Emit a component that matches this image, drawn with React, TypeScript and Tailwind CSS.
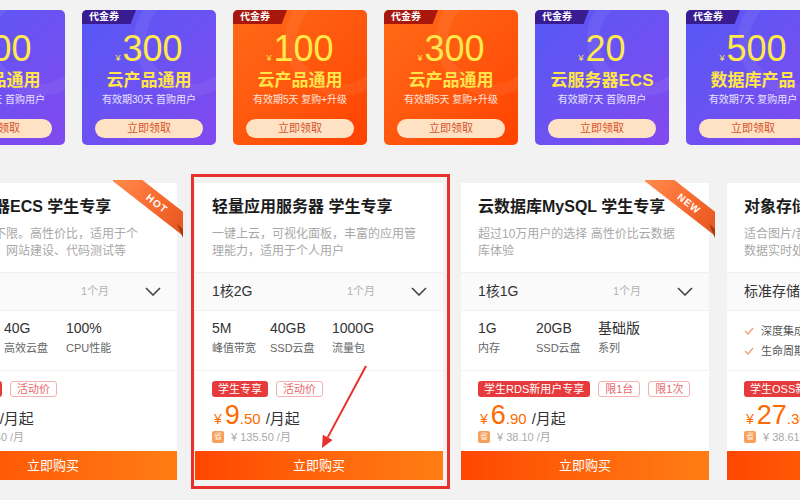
import React from 'react';

type Coupon = {
  amount: string;
  title: string;
  note: string;
  tone: 'purple' | 'orange';
};

type Tag = { text: string; solid?: boolean };

type Product = {
  title: string;
  desc: string[];
  spec: string;
  specs?: { value: string; label: string }[];
  features?: string[];
  tags: Tag[];
  price: string;
  cents: string;
  original: string;
  ribbon?: string;
};

const coupons: Coupon[] = [
  { amount: '200', title: '云产品通用', note: '有效期30天 首购用户', tone: 'purple' },
  { amount: '300', title: '云产品通用', note: '有效期30天 首购用户', tone: 'purple' },
  { amount: '100', title: '云产品通用', note: '有效期5天 复购+升级', tone: 'orange' },
  { amount: '300', title: '云产品通用', note: '有效期5天 复购+升级', tone: 'orange' },
  { amount: '20', title: '云服务器ECS', note: '有效期7天 首购用户', tone: 'purple' },
  { amount: '500', title: '数据库产品', note: '有效期7天 复购用户', tone: 'purple' },
];

const products: Product[] = [
  {
    title: '云服务器ECS 学生专享',
    desc: ['峰值带宽不限。高性价比，适用于个', '人开发者、网站建设、代码测试等'],
    spec: '1核2G',
    specs: [
      { value: '2G', label: '内存' },
      { value: '40G', label: '高效云盘' },
      { value: '100%', label: 'CPU性能' },
    ],
    tags: [{ text: '学生专享', solid: true }, { text: '活动价' }],
    price: '9',
    cents: '.50',
    original: '¥ 117.50 /月',
    ribbon: 'HOT',
  },
  {
    title: '轻量应用服务器 学生专享',
    desc: ['一键上云，可视化面板，丰富的应用管', '理能力，适用于个人用户'],
    spec: '1核2G',
    specs: [
      { value: '5M', label: '峰值带宽' },
      { value: '40GB', label: 'SSD云盘' },
      { value: '1000G', label: '流量包' },
    ],
    tags: [{ text: '学生专享', solid: true }, { text: '活动价' }],
    price: '9',
    cents: '.50',
    original: '¥ 135.50 /月',
  },
  {
    title: '云数据库MySQL 学生专享',
    desc: ['超过10万用户的选择 高性价比云数据', '库体验'],
    spec: '1核1G',
    specs: [
      { value: '1G', label: '内存' },
      { value: '20GB', label: 'SSD云盘' },
      { value: '基础版', label: '系列' },
    ],
    tags: [{ text: '学生RDS新用户专享', solid: true }, { text: '限1台' }, { text: '限1次' }],
    price: '6',
    cents: '.90',
    original: '¥ 38.10 /月',
    ribbon: 'NEW',
  },
  {
    title: '对象存储OSS 学生专享',
    desc: ['适合图片/音视频等多媒体数据存储，', '数据实时处理，海量存储'],
    spec: '标准存储',
    features: ['深度集成数据处理服务', '生命周期管理'],
    tags: [{ text: '学生OSS新用户专享', solid: true }],
    price: '27',
    cents: '.30',
    original: '¥ 38.61 /月',
  },
];

function CouponCard({ c }: { c: Coupon }) {
  const purple = c.tone === 'purple';
  return (
    <div
      className={`relative h-[135px] w-[134px] shrink-0 overflow-hidden rounded-[5px] bg-linear-to-br ${
        purple ? 'from-[#5358f6] to-[#8249ef]' : 'from-[#ff6a18] to-[#ff4100]'
      }`}
    >
      <div className="absolute -right-[30px] -top-[26px] h-[112px] w-[112px] rounded-full border-[12px] border-white/[0.06]" />
      <div
        className={`absolute left-0 top-0 flex h-[14px] w-[54px] items-center pl-[7px] text-[10px] font-bold leading-none text-white [clip-path:polygon(0_0,100%_0,90%_100%,0_100%)] ${
          purple ? 'bg-[#3a1c92]' : 'bg-[#a8170e]'
        }`}
      >
        代金券
      </div>
      <div className="relative flex flex-col items-center pt-[21px]">
        <div className="flex items-baseline text-[#ffe94c]">
          <span className="mr-[2px] text-[9px]">¥</span>
          <span className="text-[36px] leading-[36px]">{c.amount}</span>
        </div>
        <div className="mt-[3px] whitespace-nowrap text-[17px] font-bold leading-[22px] text-[#ffe54a]">
          {c.title}
        </div>
        <div className="mt-[1px] whitespace-nowrap text-[10px] leading-[14px] text-white/85">{c.note}</div>
        <div className="mt-[12px] flex h-[19px] w-[108px] items-center justify-center rounded-full bg-[#ffe2c4] text-[11px] text-[#d5532b]">
          立即领取
        </div>
      </div>
    </div>
  );
}

function Ribbon({ text }: { text: string }) {
  return (
    <div className="pointer-events-none absolute right-[-6px] top-[-3px] h-[60px] w-[70px] overflow-hidden">
      <div className="absolute left-[-6px] top-[14px] flex h-[19px] w-[100px] rotate-[38deg] items-center justify-center bg-linear-to-r from-[#ff8a4c] via-[#f86a2e] to-[#e0501c] text-[10px] font-bold tracking-[1px] text-white">
        {text}
      </div>
      <div className="absolute bottom-[2px] right-0 h-[14px] w-[6px] bg-[#a9380f] [clip-path:polygon(0_0,100%_35%,100%_100%)]" />
    </div>
  );
}

function Chevron() {
  return (
    <svg width="16" height="9" viewBox="0 0 16 9">
      <polyline points="1,1 8,8 15,1" fill="none" stroke="#444" strokeWidth="1.6" />
    </svg>
  );
}

function ProductCard({ p }: { p: Product }) {
  return (
    <div className="relative flex h-[297px] w-[248px] shrink-0 flex-col bg-white">
      {p.ribbon && <Ribbon text={p.ribbon} />}
      <div className="h-[89px] px-[17px] pt-[13px]">
        <div className="whitespace-nowrap text-[16px] font-bold leading-[22px] text-[#1c1c1c]">{p.title}</div>
        <div className="mt-[8px] text-[12px] leading-[17px] text-[#a8a8a8]">
          {p.desc.map((l) => (
            <div key={l} className="whitespace-nowrap">
              {l}
            </div>
          ))}
        </div>
      </div>
      <div className="flex h-[39px] items-center justify-between border-y border-[#f0f0f0] bg-[#fafafa] pl-[17px] pr-[16px]">
        <span className="text-[14px] text-[#333]">{p.spec}</span>
        <div className="flex items-center gap-[36px]">
          <span className="text-[11px] text-[#b3b3b3]">1个月</span>
          <Chevron />
        </div>
      </div>
      <div className="h-[59px] px-[17px]">
        {p.specs && (
          <div className="grid grid-cols-[58px_62px_auto] pt-[7px]">
            {p.specs.map((s) => (
              <div key={s.label}>
                <div className="text-[14px] leading-[20px] text-[#333]">{s.value}</div>
                <div className="mt-[2px] whitespace-nowrap text-[11px] leading-[16px] text-[#666]">{s.label}</div>
              </div>
            ))}
          </div>
        )}
        {p.features && (
          <div className="pt-[10px]">
            {p.features.map((f) => (
              <div key={f} className="flex h-[20px] items-center gap-[7px]">
                <svg width="10" height="8" viewBox="0 0 10 8">
                  <polyline points="1,4 4,7 9,1" fill="none" stroke="#f0a070" strokeWidth="1.3" />
                </svg>
                <span className="whitespace-nowrap text-[11px] text-[#555]">{f}</span>
              </div>
            ))}
          </div>
        )}
      </div>
      <div className="flex-1 border-t border-[#f2f2f2] px-[17px] pt-[10px]">
        <div className="flex gap-[8px]">
          {p.tags.map((t) => (
            <span
              key={t.text}
              className={`flex h-[16px] items-center whitespace-nowrap rounded-[3px] px-[6px] text-[11px] ${
                t.solid ? 'bg-[#e63a3c] text-white' : 'border border-[#f2b1b1] text-[#e8686a]'
              }`}
            >
              {t.text}
            </span>
          ))}
        </div>
        <div className="mt-[7px] flex h-[22px] items-baseline whitespace-nowrap text-[#ff6a00]">
          <span className="ml-[2px] mr-[3px] text-[14px]">¥</span>
          <span className="text-[27px] leading-[22px]">{p.price}</span>
          <span className="text-[15px]">{p.cents}</span>
          <span className="ml-[5px] text-[15px] text-[#333]">/月起</span>
        </div>
        <div className="mt-[4px] flex h-[14px] items-center gap-[7px]">
          <span className="flex h-[12px] w-[12px] items-center justify-center rounded-[2px] bg-[#f6a05c] text-[8px] leading-none text-[#fff3e0]">
            省
          </span>
          <span className="whitespace-nowrap text-[11px] text-[#aaa]">{p.original}</span>
        </div>
      </div>
      <div className="flex h-[29px] items-center justify-center bg-linear-to-r from-[#ff4600] to-[#ff7d14] text-[13px] text-white">
        立即购买
      </div>
    </div>
  );
}

export default function App() {
  return (
    <div className="relative h-[500px] w-[800px] overflow-hidden bg-[#f2f2f2] font-['Liberation_Sans','Noto_Sans_CJK_SC',sans-serif]">
      <div className="ml-[-69px] mt-[10px] flex gap-[17px]">
        {coupons.map((c, i) => (
          <CouponCard key={i} c={c} />
        ))}
      </div>
      <div className="ml-[-71px] mt-[38px] flex gap-[18px]">
        {products.map((p) => (
          <ProductCard key={p.title} p={p} />
        ))}
      </div>

      {/* annotation: highlight box + arrow */}
      <div className="pointer-events-none absolute left-[191px] top-[174px] h-[315px] w-[259px] border-[3px] border-[#e8302d]" />
      <svg className="pointer-events-none absolute left-[310px] top-[360px]" width="70" height="95" viewBox="0 0 70 95">
        <line x1="56" y1="6" x2="17.7" y2="77.4" stroke="#e8302d" strokeWidth="2" />
        <polygon points="12,88 22.6,80 12.8,74.8" fill="#e8302d" />
      </svg>
    </div>
  );
}
